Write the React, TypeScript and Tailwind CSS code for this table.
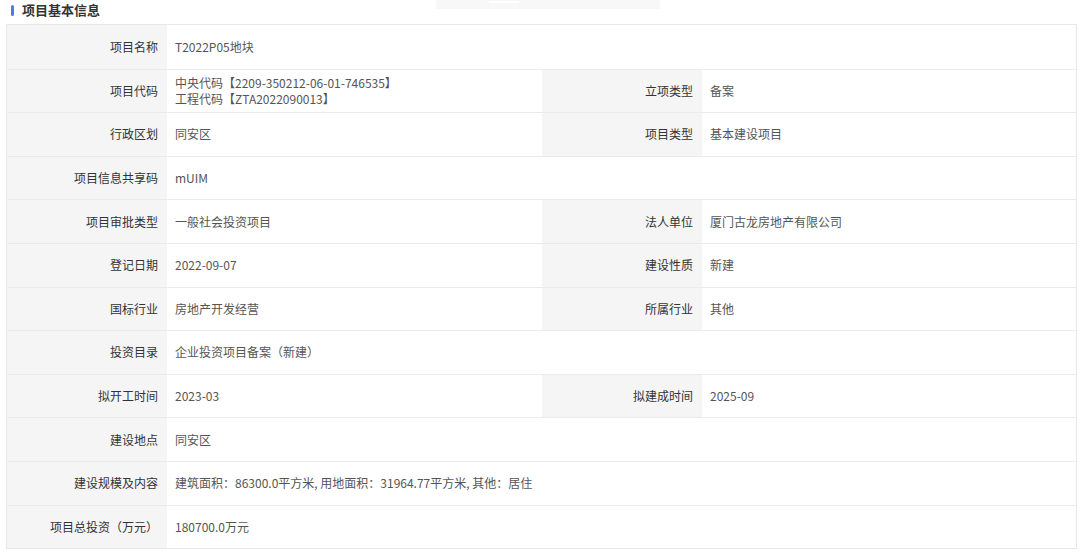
import React from "react";

type Row = {
  label: string;
  value: React.ReactNode;
  label2?: string;
  value2?: string;
};

const rows: Row[] = [
  { label: "项目名称", value: "T2022P05地块" },
  {
    label: "项目代码",
    value: (
      <div className="leading-[16px]">
        <div>中央代码【2209-350212-06-01-746535】</div>
        <div>工程代码【ZTA2022090013】</div>
      </div>
    ),
    label2: "立项类型",
    value2: "备案",
  },
  { label: "行政区划", value: "同安区", label2: "项目类型", value2: "基本建设项目" },
  { label: "项目信息共享码", value: "mUIM" },
  { label: "项目审批类型", value: "一般社会投资项目", label2: "法人单位", value2: "厦门古龙房地产有限公司" },
  { label: "登记日期", value: "2022-09-07", label2: "建设性质", value2: "新建" },
  { label: "国标行业", value: "房地产开发经营", label2: "所属行业", value2: "其他" },
  { label: "投资目录", value: "企业投资项目备案（新建）" },
  { label: "拟开工时间", value: "2023-03", label2: "拟建成时间", value2: "2025-09" },
  { label: "建设地点", value: "同安区" },
  { label: "建设规模及内容", value: "建筑面积：86300.0平方米, 用地面积：31964.77平方米, 其他：居住" },
  { label: "项目总投资（万元）", value: "180700.0万元" },
];

function Label({ children }: { children: React.ReactNode }) {
  return (
    <div className="bg-[#f5f5f5] flex items-center justify-end pr-[9px] text-[#333]">{children}</div>
  );
}

function Value({ children, span }: { children: React.ReactNode; span?: boolean }) {
  return (
    <div className={span ? "col-span-3 flex items-center pl-[8px] text-[#555]" : "flex items-center pl-[8px] text-[#555]"}>
      {children}
    </div>
  );
}

export default function App() {
  return (
    <div
      className="relative w-[1080px] h-[555px] bg-white overflow-hidden text-[12px]"
      style={{ fontFamily: '"Noto Sans CJK SC", "Noto Sans", sans-serif' }}
    >
      {/* faint strip at top */}
      <div className="absolute left-[436px] top-0 w-[224px] h-[9px] bg-[#f8f8f8]">
        <div className="ml-[53px] mt-[1px] w-[30px] h-[2px] bg-white" />
      </div>

      {/* Title */}
      <div className="h-[24px] flex items-center pl-[11px] gap-[8px]">
        <div className="w-[3px] h-[11px] rounded-full bg-[#4b7bec] -mt-[4px]" />
        <div className="text-[13px] font-bold text-[#333] -mt-[4px]">项目基本信息</div>
      </div>

      {/* Table */}
      <div className="ml-[6px] w-[1071px] border border-[#e8e8e8]">
        {rows.map((r, i) => (
          <div
            key={i}
            className={
              i === 0
                ? "grid grid-cols-[160px_375px_160px_1fr] h-[43.6px]"
                : "grid grid-cols-[160px_375px_160px_1fr] h-[43.6px] border-t border-[#ebebeb]"
            }
          >
            <Label>{r.label}</Label>
            {r.label2 ? (
              <>
                <Value>{r.value}</Value>
                <Label>{r.label2}</Label>
                <Value>{r.value2}</Value>
              </>
            ) : (
              <Value span>{r.value}</Value>
            )}
          </div>
        ))}
      </div>
    </div>
  );
}
